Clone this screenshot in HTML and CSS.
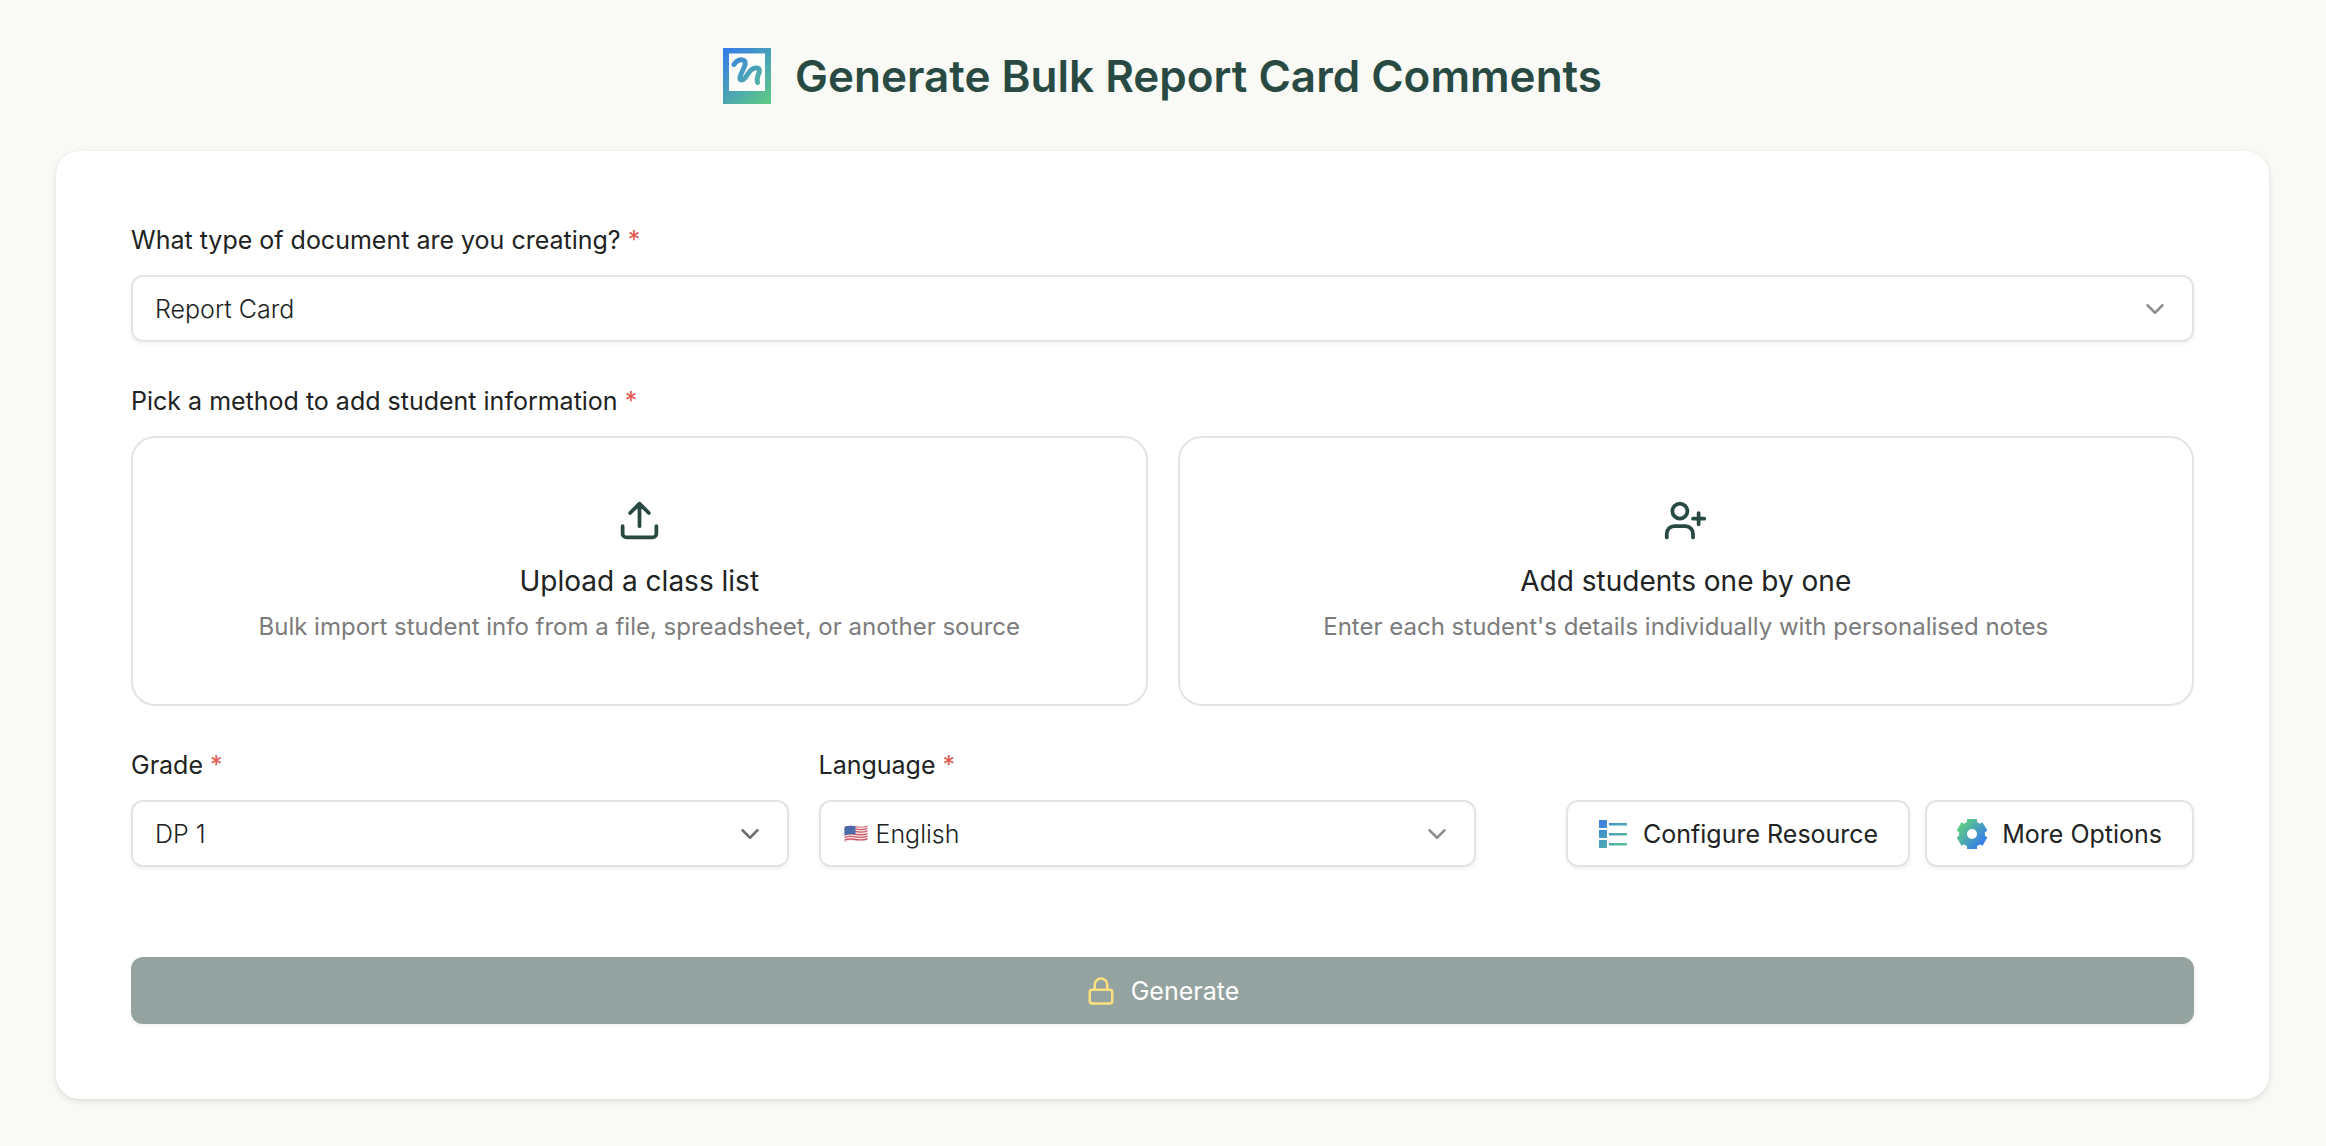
FILE: index.html
```html
<!DOCTYPE html>
<html lang="en">
<head>
<meta charset="utf-8">
<meta name="viewport" content="width=device-width, initial-scale=1">
<title>Generate Bulk Report Card Comments</title>
<link rel="stylesheet" href="styles.css">
</head>
<body>
<header class="page-header">
  <svg class="logo" viewBox="0 0 48 56" aria-hidden="true">
    <defs>
      <linearGradient id="logo-fill" gradientUnits="userSpaceOnUse" x1="0" y1="2" x2="48" y2="54">
        <stop offset="0" stop-color="#357bea"/>
        <stop offset="1" stop-color="#5fcb83"/>
      </linearGradient>
    </defs>
    <path fill="url(#logo-fill)" d="M0 0h48v56H0z"/>
    <path fill="#fdfefc" d="M6 5.500h36v37.500H6z"/>
    <path class="squiggle" d="M11 16.500C13 13 17 11 20 12c4.500 1.500 1 8-1 12-2.500 5-3 8 0 8 4.500 0 6-11.500 13.500-12 5-.3 4.500 3.500 2.500 7.500-1 2.500-1.500 4-.5 7"/>
  </svg>
  <h1>Generate Bulk Report Card Comments</h1>
</header>

<main class="card">
  <form>
    <div class="field">
      <label for="doc-type">What type of document are you creating? <span class="required">*</span></label>
      <div class="select">
        <select id="doc-type"><option>Report Card</option></select>
        <svg class="chevron" viewBox="0 0 24 24" aria-hidden="true"><path d="m6 9 6 6 6-6"/></svg>
      </div>
    </div>

    <fieldset class="field">
      <legend>Pick a method to add student information <span class="required">*</span></legend>
      <div class="methods">
        <button type="button" class="method">
          <svg class="method-icon" viewBox="0 0 24 24" aria-hidden="true">
            <path d="M21 15v4a2 2 0 0 1-2 2H5a2 2 0 0 1-2-2v-4M17 8l-5-5-5 5M12 3v12"/>
          </svg>
          <span class="method-title">Upload a class list</span>
          <span class="method-text">Bulk import student info from a file, spreadsheet, or another source</span>
        </button>
        <button type="button" class="method">
          <svg class="method-icon" viewBox="0 0 24 24" aria-hidden="true">
            <path d="M16 21v-2a4 4 0 0 0-4-4H6a4 4 0 0 0-4 4v2M19 8v6M22 11h-6"/>
            <circle cx="9" cy="7" r="4"/>
          </svg>
          <span class="method-title">Add students one by one</span>
          <span class="method-text">Enter each student's details individually with personalised notes</span>
        </button>
      </div>
    </fieldset>

    <div class="settings">
      <div class="field">
        <label for="grade">Grade <span class="required">*</span></label>
        <div class="select">
          <select id="grade"><option>DP 1</option></select>
          <svg class="chevron chevron-dark" viewBox="0 0 24 24" aria-hidden="true"><path d="m6 9 6 6 6-6"/></svg>
        </div>
      </div>
      <div class="field">
        <label for="language">Language <span class="required">*</span></label>
        <div class="select with-flag">
          <svg class="flag" viewBox="0 0 24 18" aria-hidden="true">
            <defs>
              <clipPath id="flag-shape"><path d="M.5 2C4 .5 8 .5 12 1.300c4 .8 8 .5 11.500-.8v14.500c-3.500 1.500-7.500 1.500-11.500 1S4 15.500.5 17z"/></clipPath>
            </defs>
            <g clip-path="url(#flag-shape)">
              <path fill="#f3e9ea" d="M0 0h24v18H0z"/>
              <path class="stripes" d="M0 2.200c4-1.500 8-1.500 12-.7s8 .5 12-.8M0 4.800c4-1.500 8-1.500 12-.7s8 .5 12-.8M0 7.400c4-1.500 8-1.500 12-.7s8 .5 12-.8M0 10c4-1.500 8-1.500 12-.7s8 .5 12-.8M0 12.600c4-1.500 8-1.500 12-.7s8 .5 12-.8M0 15.200c4-1.500 8-1.500 12-.7s8 .5 12-.8M0 17.800c4-1.500 8-1.500 12-.7s8 .5 12-.8"/>
              <path fill="#4a6ba8" d="M0 0h11.500v9.500C8 9 4 9 0 10.500z"/>
            </g>
          </svg>
          <select id="language"><option>English</option></select>
          <svg class="chevron" viewBox="0 0 24 24" aria-hidden="true"><path d="m6 9 6 6 6-6"/></svg>
        </div>
      </div>
      <div class="actions">
        <button type="button" class="action">
          <svg class="action-icon" viewBox="0 0 30 30" aria-hidden="true">
            <defs>
              <linearGradient id="list-fill" gradientUnits="userSpaceOnUse" x1="2" y1="2" x2="28" y2="28">
                <stop offset="0" stop-color="#3b7fe4"/>
                <stop offset="1" stop-color="#58c78a"/>
              </linearGradient>
            </defs>
            <path fill="url(#list-fill)" d="M1 1h8v8H1zM1 11h8v8H1zM1 21h8v8H1zM11 4h18v2.500H11zM11 14h18v2.500H11zM11 24h18v2.500H11z"/>
          </svg>
          Configure Resource
        </button>
        <button type="button" class="action">
          <svg class="action-icon" viewBox="0 0 30 30" aria-hidden="true">
            <defs>
              <linearGradient id="gear-fill" gradientUnits="userSpaceOnUse" x1="3" y1="5" x2="27" y2="25">
                <stop offset="0" stop-color="#60d080"/>
                <stop offset="1" stop-color="#3478f0"/>
              </linearGradient>
              <mask id="gear-mask">
                <circle cx="15" cy="15" r="13" fill="#fff"/>
                <path fill="#fff" d="M10 0h10v30H10z"/>
                <path fill="#fff" d="M10 0h10v30H10z" transform="rotate(60 15 15)"/>
                <path fill="#fff" d="M10 0h10v30H10z" transform="rotate(120 15 15)"/>
                <circle cx="15" cy="15" r="5" fill="#000"/>
              </mask>
            </defs>
            <path fill="url(#gear-fill)" mask="url(#gear-mask)" d="M0 0h30v30H0z"/>
          </svg>
          More Options
        </button>
      </div>
    </div>

    <button type="submit" class="generate" disabled>
      <svg class="lock" viewBox="0 0 24 24" aria-hidden="true">
        <rect x="3" y="11" width="18" height="11" rx="2"/>
        <path d="M7 11V7a5 5 0 0 1 10 0v4"/>
      </svg>
      Generate
    </button>
  </form>
</main>
</body>
</html>
```
FILE: styles.css
```css
:root {
  --ink: #212322;
  --green: #284a43;
  --line: #e4e4e4;
  --shadow: 0 2px 4px rgb(0 0 0 / 6%);
}

* { box-sizing: border-box; }

body {
  margin: 0;
  padding: 0 57px 46px 56px;
  background: #f9faf5;
  color: var(--ink);
  font: 400 25px/30px Inter, "Liberation Sans", sans-serif;
}

.page-header {
  display: flex;
  align-items: center;
  justify-content: center;
  gap: 24px;
  padding: 46px 0 45px;
}

.logo { width: 48px; height: 56px; }

.squiggle {
  fill: none;
  stroke: url(#logo-fill);
  stroke-width: 5;
  stroke-linecap: round;
}

h1 {
  margin: 0;
  color: var(--green);
  font-size: 44px;
  font-weight: 600;
  line-height: 60px;
}

.card {
  padding: 74px 75px 75px;
  border-radius: 24px;
  background: #fff;
  box-shadow: 0 2px 6px rgb(0 0 0 / 12%);
}

form {
  display: flex;
  flex-direction: column;
  gap: 44px;
}

.field {
  min-width: 0;
  margin: 0;
  padding: 0;
  border: 0;
}

label, legend {
  display: block;
  margin-bottom: 20px;
  padding: 0;
}

.required { color: #e25950; }

.select {
  display: grid;
  align-items: center;
}

.select > * { grid-area: 1 / 1; }

select {
  width: 100%;
  height: 67px;
  padding: 0 60px 0 22px;
  border: 2px solid var(--line);
  border-radius: 12px;
  appearance: none;
  background: #fff;
  box-shadow: var(--shadow);
  color: var(--ink);
  font: inherit;
  font-weight: 300;
}

.chevron {
  justify-self: end;
  width: 30px;
  height: 30px;
  margin-right: 24px;
  fill: none;
  stroke: #8f8f8f;
  stroke-width: 2;
  stroke-linecap: round;
  stroke-linejoin: round;
  pointer-events: none;
}

.chevron-dark { stroke: #6f6f6f; }

.with-flag select { padding-left: 55px; }

.flag {
  z-index: 1;
  width: 24px;
  height: 18px;
  margin-left: 25px;
  pointer-events: none;
}

.stripes {
  fill: none;
  stroke: #cf5a68;
  stroke-width: 1.3;
}

.methods {
  display: grid;
  grid-template-columns: 1fr 1fr;
  gap: 30px;
}

.method {
  display: flex;
  flex-direction: column;
  align-items: center;
  padding: 60px 24px 57px;
  border: 2px solid var(--line);
  border-radius: 24px;
  background: #fff;
  color: var(--ink);
  font: inherit;
}

.method-icon {
  width: 45px;
  height: 45px;
  margin-bottom: 18px;
  fill: none;
  stroke: var(--green);
  stroke-width: 2;
  stroke-linecap: round;
  stroke-linejoin: round;
}

.method-title {
  margin-bottom: 6px;
  font-size: 28px;
  line-height: 40px;
}

.method-text {
  color: #7c7c7c;
  font-size: 24px;
  line-height: 40px;
}

.settings {
  display: grid;
  grid-template-columns: 1fr 1fr auto;
  align-items: end;
  gap: 30px;
  margin-bottom: 46px;
}

.actions {
  display: flex;
  gap: 15px;
  padding-left: 60px;
}

.action, .generate {
  display: flex;
  align-items: center;
  justify-content: center;
  gap: 15px;
  height: 67px;
  padding: 0 30px;
  border: 2px solid var(--line);
  border-radius: 12px;
  background: #fff;
  box-shadow: var(--shadow);
  color: var(--ink);
  font: inherit;
}

.action-icon, .lock { width: 30px; height: 30px; }

.generate {
  border: 0;
  background: #94a39f;
  color: #fff;
}

.lock {
  fill: none;
  stroke: #fbe07f;
  stroke-width: 2;
  stroke-linecap: round;
  stroke-linejoin: round;
}
```
